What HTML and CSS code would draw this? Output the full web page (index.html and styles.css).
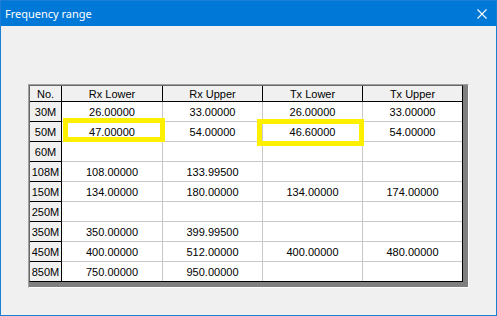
FILE: index.html
```html
<!DOCTYPE html>
<html lang="en">
<head>
    <meta charset="UTF-8">
    <title>Frequency range</title>
    <link rel="stylesheet" href="styles.css">
</head>
<body>
    <div class="window">
        <div class="titlebar">
            <span class="title">Frequency range</span>
            <svg class="close" width="10" height="10" viewBox="0 0 10 10">
                <path d="M0.5 0.5 L9.5 9.5 M9.5 0.5 L0.5 9.5" stroke="#fff" stroke-width="1.1" fill="none"/>
            </svg>
        </div>

        <div class="client">
            <div class="grid-frame">
                <table class="grid">
                    <thead>
                        <tr>
                            <th>No.</th>
                            <th>Rx Lower</th>
                            <th>Rx Upper</th>
                            <th>Tx Lower</th>
                            <th>Tx Upper</th>
                        </tr>
                    </thead>
                    <tbody>
                        <tr><th>30M</th><td>26.00000</td><td>33.00000</td><td>26.00000</td><td>33.00000</td></tr>
                        <tr><th>50M</th><td>47.00000</td><td>54.00000</td><td>46.60000</td><td>54.00000</td></tr>
                        <tr><th>60M</th><td></td><td></td><td></td><td></td></tr>
                        <tr><th>108M</th><td>108.00000</td><td>133.99500</td><td></td><td></td></tr>
                        <tr><th>150M</th><td>134.00000</td><td>180.00000</td><td>134.00000</td><td>174.00000</td></tr>
                        <tr><th>250M</th><td></td><td></td><td></td><td></td></tr>
                        <tr><th>350M</th><td>350.00000</td><td>399.99500</td><td></td><td></td></tr>
                        <tr><th>450M</th><td>400.00000</td><td>512.00000</td><td>400.00000</td><td>480.00000</td></tr>
                        <tr><th>850M</th><td>750.00000</td><td>950.00000</td><td></td><td></td></tr>
                    </tbody>
                </table>

                <div class="mark mark-rx"></div>
                <div class="mark mark-tx"></div>
            </div>
        </div>
    </div>
</body>
</html>
```

FILE: styles.css
```css
body {
    margin: 0;
    background: #ffffff;
    font-family: 'Liberation Sans', Arial, sans-serif;
}

.window {
    width: 497px;
    height: 316px;
    box-sizing: border-box;
    border: 1px solid #1c7fd6;
    display: flex;
    flex-direction: column;
}

.titlebar {
    height: 25px;
    background-color: #0078d7;
    display: flex;
    align-items: center;
    justify-content: space-between;
    padding: 0 9px 0 4px;
}

.title {
    color: #ffffff;
    font-family: 'Noto Sans', sans-serif;
    font-size: 11px;
    margin-top: -1px;
}

.client {
    flex: 1;
    background-color: #f0f0f0;
    padding: 58px 0 0 27px;
}

.grid-frame {
    position: relative;
    display: inline-block;
    background-color: #808080;
    border-top: 1px solid #a0a0a0;
    border-left: 1px solid #a0a0a0;
    border-right: 1px solid #ffffff;
    border-bottom: 1px solid #ffffff;
    padding: 0 5px 5px 0;
}

.grid {
    border-collapse: separate;
    border-spacing: 0;
    table-layout: fixed;
    background-color: #ffffff;
    border-top: 1px solid #696969;
    border-left: 1px solid #696969;
    border-right: 1px solid #000000;
    border-bottom: 1px solid #000000;
    font-size: 11px;
    color: #000000;
}

.grid th,
.grid td {
    box-sizing: border-box;
    padding: 0;
    text-align: center;
    font-weight: normal;
    white-space: nowrap;
    height: 20px;
    width: 100px;
    border-right: 1px solid #c8c8c8;
    border-bottom: 1px solid #c8c8c8;
}

.grid thead th {
    height: 16px;
    background-color: #f0f0f0;
    border-right: 1px solid #000000;
    border-bottom: 1px solid #000000;
    line-height: 14px;
}

.grid tbody th {
    background-color: #f0f0f0;
    border-right: 1px solid #000000;
    border-bottom: 1px solid #000000;
}

.grid tr > :first-child {
    width: 32px;
}

.grid tr > :nth-child(2) {
    width: 101px;
}

.grid tr > :last-child {
    width: 99px;
    border-right: none;
}

.grid tbody tr:last-child > * {
    height: 19px;
    border-bottom: none;
}

.mark {
    position: absolute;
    box-sizing: border-box;
    border: 5px solid #fff000;
}

.mark-rx {
    left: 34px;
    top: 33px;
    width: 102px;
    height: 24px;
}

.mark-tx {
    left: 228px;
    top: 34px;
    width: 107px;
    height: 27px;
}
```
